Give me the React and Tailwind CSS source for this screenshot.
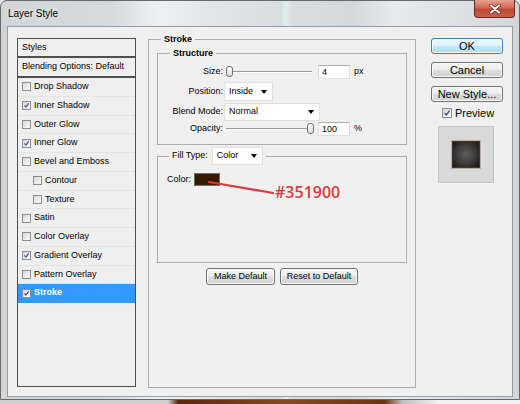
const rows = [
  { label: 'Drop Shadow', on: false },
  { label: 'Inner Shadow', on: true },
  { label: 'Outer Glow', on: false },
  { label: 'Inner Glow', on: true },
  { label: 'Bevel and Emboss', on: false },
  { label: 'Contour', on: false, sub: true },
  { label: 'Texture', on: false, sub: true },
  { label: 'Satin', on: false },
  { label: 'Color Overlay', on: false },
  { label: 'Gradient Overlay', on: true },
  { label: 'Pattern Overlay', on: false },
  { label: 'Stroke', on: true, selected: true },
];

function Check({ on, big }) {
  return (
    <span
      className={`flex items-center justify-center shrink-0 border border-[#8e8f8f] bg-[linear-gradient(135deg,#d4d6da,#fbfbfb)] ${
        big ? 'w-[10px] h-[10px]' : 'w-[9px] h-[9px]'
      }`}
    >
      {on && (
        <svg viewBox="0 0 9 9" className="w-full h-full">
          <path d="M1.8 4.4 L3.7 6.6 L7.4 1.8" fill="none" stroke="#3b4f8a" strokeWidth="1.5" />
        </svg>
      )}
    </span>
  );
}

function Slider({ at }) {
  return (
    <div className="relative w-[86px] h-full ml-[3px] flex items-center">
      <div className="w-full h-[2px] border-t border-[#9a9a9a] border-b border-b-white" />
      <div
        className="absolute top-[1px] w-[7px] h-[11px] rounded-[3px] border border-[#6f6f6f] bg-[linear-gradient(#ffffff,#d9d9d9)]"
        style={{ left: at }}
      />
    </div>
  );
}

function Field({ value }) {
  return (
    <div className="w-[32px] h-[14px] ml-[6px] bg-white border border-[#dbdfe6] border-t-[#abadb3] pl-[3px] text-[9px] leading-[12px]">
      {value}
    </div>
  );
}

function Select({ value, w, h }) {
  return (
    <div
      className={`flex items-center justify-between bg-white border border-[#e0e0e0] pl-[4px] pr-[5px] text-[9px] ${w} ${h}`}
    >
      <span>{value}</span>
      <svg width="6" height="4" viewBox="0 0 6 4">
        <path d="M0 0 H6 L3 4 Z" fill="#000" />
      </svg>
    </div>
  );
}

function Btn({ children, w, primary, small }) {
  return (
    <div
      className={`flex items-center justify-center rounded-[3px] border shadow-[inset_0_0_0_1px_#fbfbfb] ${w} ${
        small ? 'h-[17px] text-[9px]' : 'h-[16px] text-[11px]'
      } ${
        primary
          ? 'border-[#3c7fb1] bg-[linear-gradient(#ecf7fd_0%,#dcf1fc_50%,#c4e7f9_50%,#b1ddf4_100%)]'
          : 'border-[#707070] bg-[linear-gradient(#f4f4f4_0%,#ececec_50%,#dedede_50%,#d0d0d0_100%)]'
      }`}
    >
      {children}
    </div>
  );
}

export default function App() {
  return (
    <div className="w-[520px] h-[404px] overflow-hidden relative bg-[#e6e6e6] font-['Liberation_Sans',Arial,sans-serif] text-black">
      <div className="h-[400px] flex flex-col rounded-t-[7px] border border-[#666a6e] px-[6px] pb-[2px] bg-[linear-gradient(90deg,#d2d5d8_0%,#d8dbde_22%,#eef0f1_30%,#e3e5e7_40%,#dadddf_54%,#e2f0f0_55%,#dadddf_56%,#d6d9dc_68%,#e8eaec_76%,#d4d7da_100%)]">
        <div className="h-[25px] flex items-center pl-[1px] text-[10px] [text-shadow:0_0_6px_#fff]">
          Layer Style
        </div>

        <div className="flex-1 flex border border-[#969ca2] bg-[#f0f0f0] pl-[9px] pt-[6px]">
          {/* styles list */}
          <div className="mt-[5px] w-[119px] h-[349px] border border-[#4e4e4e] bg-[#efefef] text-[9px]">
            <div className="h-[19px] flex items-center pl-[4px] border-b-2 border-[#4e4e4e]">Styles</div>
            <div className="h-[20px] flex items-center pl-[4px] border-b-2 border-[#4e4e4e]">
              Blending Options: Default
            </div>
            {rows.map((r) => (
              <div
                key={r.label}
                className={`h-[18.75px] flex items-center gap-[3px] border-b ${
                  r.sub ? 'pl-[15px]' : 'pl-[4px]'
                } ${r.selected ? 'bg-[#3399ff] border-[#3399ff] text-white font-bold' : 'border-[#e4e4e4]'}`}
              >
                <Check on={r.on} />
                <span>{r.label}</span>
              </div>
            ))}
          </div>

          {/* stroke panel */}
          <fieldset className="ml-[12px] w-[268px] h-[355px] border border-[#acacac]">
            <legend className="ml-[12px] px-[3px] text-[9px] leading-[12px] font-bold">Stroke</legend>
            <div className="px-[8px] pt-[2px] flex flex-col">
              <fieldset className="border border-[#acacac] pb-[8px]">
                <legend className="ml-[12px] px-[3px] text-[9px] leading-[12px] font-bold">Structure</legend>
                <div className="flex flex-col text-[9px]">
                  <div className="mt-[6px] h-[14px] flex items-center">
                    <span className="w-[65px] text-right">Size:</span>
                    <Slider at={0} />
                    <Field value="4" />
                    <span className="ml-[4px]">px</span>
                  </div>
                  <div className="mt-[3px] h-[19px] flex items-center">
                    <span className="w-[65px] text-right">Position:</span>
                    <div className="ml-[1px]">
                      <Select value="Inside" w="w-[49px]" h="h-[19px]" />
                    </div>
                  </div>
                  <div className="mt-[2px] h-[18px] flex items-center">
                    <span className="w-[65px] text-right">Blend Mode:</span>
                    <div className="ml-[1px]">
                      <Select value="Normal" w="w-[96px]" h="h-[18px]" />
                    </div>
                  </div>
                  <div className="mt-[1px] h-[14px] flex items-center">
                    <span className="w-[65px] text-right">Opacity:</span>
                    <Slider at={81} />
                    <Field value="100" />
                    <span className="ml-[4px]">%</span>
                  </div>
                </div>
              </fieldset>

              <fieldset className="mt-[2px] h-[116px] border border-[#acacac]">
                <legend className="ml-[11px] px-[3px] flex items-center gap-[4px] text-[9px]">
                  <span>Fill Type:</span>
                  <Select value="Color" w="w-[51px]" h="h-[18px]" />
                </legend>
                <div className="mt-[8px] pl-[9px] h-[13px] flex items-center gap-[3px] text-[9px]">
                  <span>Color:</span>
                  <span className="w-[26px] h-[13px] bg-[#351900] border border-[#6d6d6d]" />
                </div>
              </fieldset>

              <div className="mt-[5px] flex justify-center gap-[5px]">
                <Btn w="w-[69px]" small>Make Default</Btn>
                <Btn w="w-[78px]" small>Reset to Default</Btn>
              </div>
            </div>
          </fieldset>

          {/* buttons */}
          <div className="ml-[15px] mt-[5px] w-[72px] flex flex-col">
            <Btn w="w-[72px]" primary>OK</Btn>
            <div className="mt-[8px]">
              <Btn w="w-[72px]">Cancel</Btn>
            </div>
            <div className="mt-[8px]">
              <Btn w="w-[72px]">New Style...</Btn>
            </div>
            <div className="mt-[6px] ml-[11px] h-[10px] flex items-center gap-[3px] text-[11px]">
              <Check on big />
              <span>Preview</span>
            </div>
            <div className="mt-[8px] ml-[7px] w-[56px] h-[57px] bg-[#d9d9d9] border border-[#c6c6c6] flex items-center justify-center">
              <div className="w-[28px] h-[27px] border border-[#4a3322] bg-[radial-gradient(circle_at_50%_50%,#5e5e5e_0%,#3a3a3a_55%,#141414_100%)] shadow-[0_0_0_1px_#b9aea4]" />
            </div>
          </div>
        </div>
      </div>

      <div className="h-[4px] bg-[linear-gradient(90deg,#d0d0d0_0px,#d0d0d0_168px,#5a260a_178px,#8a4a1c_285px,#6a3410_385px,#bfbfbf_402px,#f2f2f2_440px)]" />

      {/* close button */}
      <div className="absolute top-0 right-[5px] w-[41px] h-[18px] rounded-b-[4px] border border-t-0 border-[#6d2a20] bg-[linear-gradient(#e8a494_0%,#d26a55_45%,#c04a35_55%,#c8614c_100%)] flex items-center justify-center">
        <svg width="12" height="10" viewBox="0 0 12 10">
          <path d="M2 1.5 L10 8.5 M10 1.5 L2 8.5" stroke="#5b1c12" strokeWidth="3.6" strokeLinecap="round" />
          <path d="M2 1.5 L10 8.5 M10 1.5 L2 8.5" stroke="#ffffff" strokeWidth="2.2" strokeLinecap="round" />
        </svg>
      </div>

      {/* red annotation */}
      <svg className="absolute left-0 top-0 pointer-events-none" width="520" height="404">
        <line x1="209" y1="182" x2="273" y2="193" stroke="#e0383e" strokeWidth="2.2" strokeLinecap="round" />
      </svg>
      <div className="absolute left-[275px] top-[182px] font-['Open_Sans',sans-serif] text-[16px] leading-[20px] font-semibold text-[#e0383e]">
        #351900
      </div>
    </div>
  );
}
